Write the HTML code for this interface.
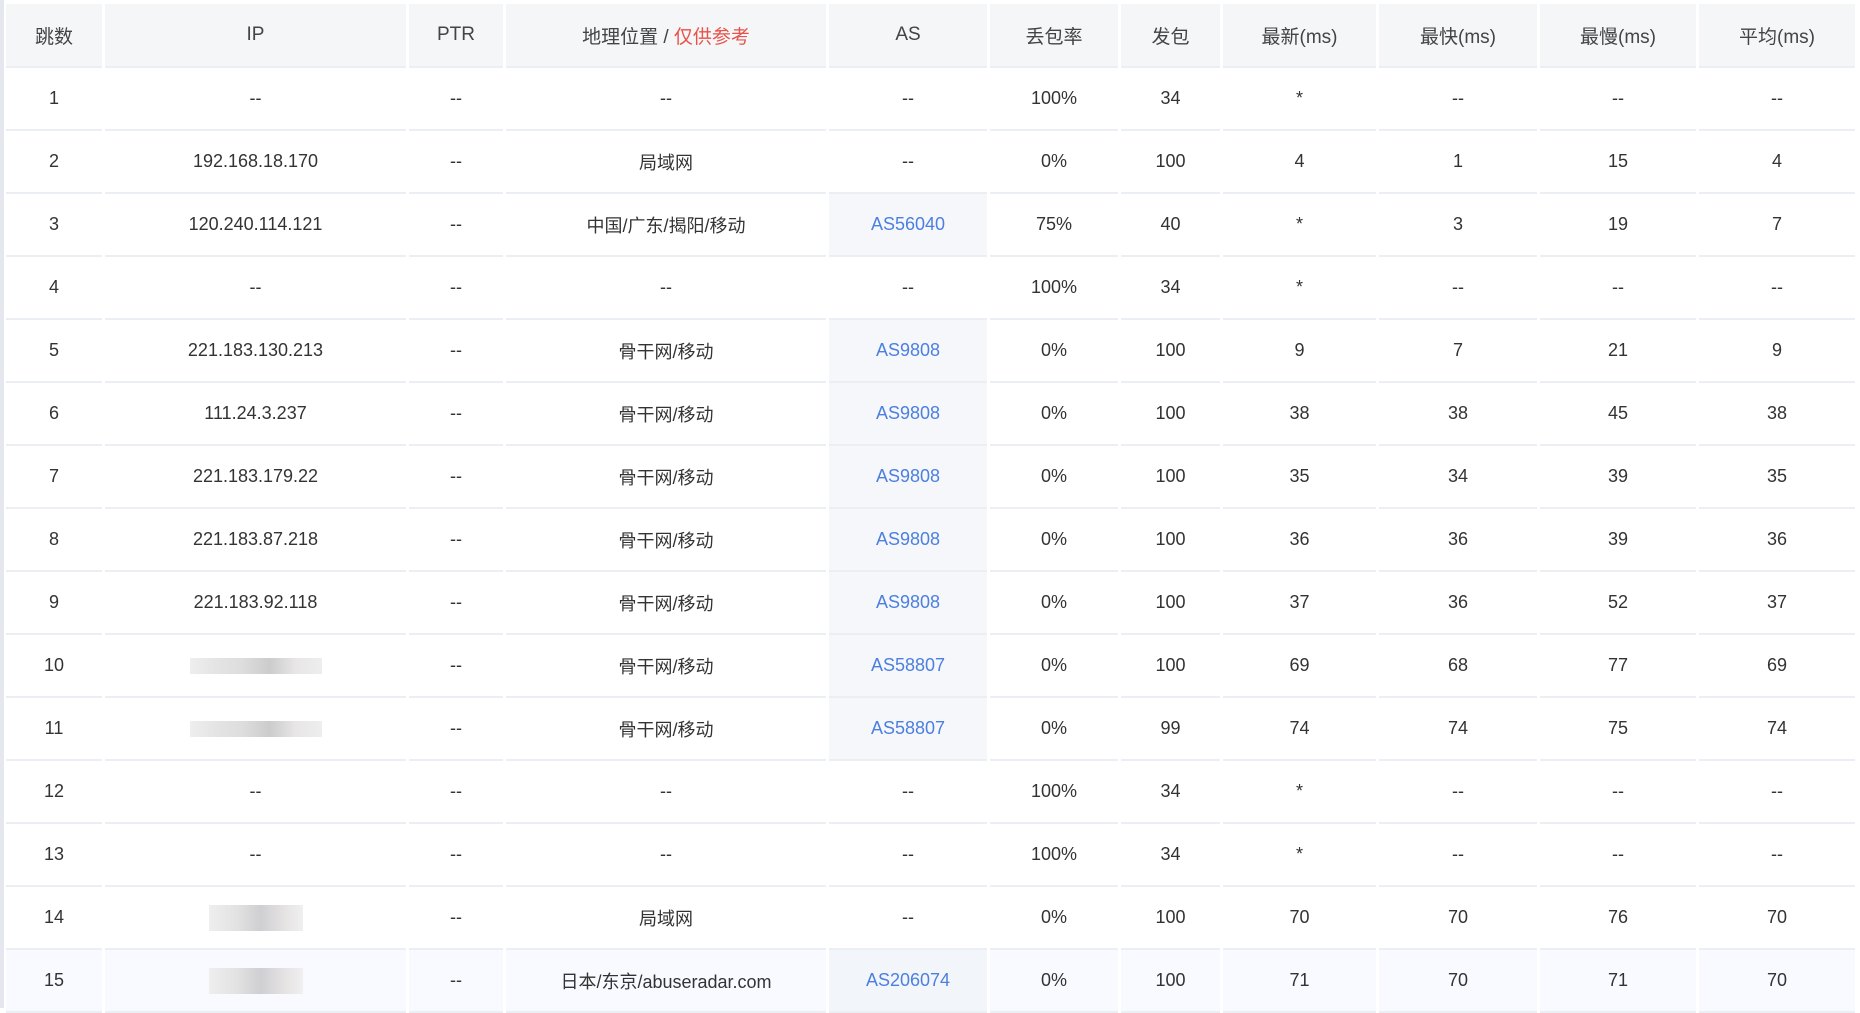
<!DOCTYPE html>
<html><head><meta charset="utf-8"><style>
html,body{margin:0;padding:0;background:#fff;width:1860px;height:1008px;overflow:hidden}
body{font-family:"Liberation Sans","Noto Sans CJK SC",sans-serif;color:#333;font-size:18px}
.edge{position:absolute;left:0;top:0;width:4px;height:1008px;background:#e4e7ed}
table{position:absolute;left:3px;top:4px;border-collapse:separate;border-spacing:3px 0;table-layout:fixed}
td,th{text-align:center;padding:0;border-bottom:2px solid #ebeef2;font-weight:normal}
th{height:62px;background:#f5f6f7;color:#444;font-size:19px}
td{height:61px}
.r{color:#e8524a}
.a{background:#f5f7fa;color:#4c7fe0}
tr.h td{background:#f8faff}
tr.h td.a{background:#f2f5fa}
.b{display:inline-block;width:132px;height:16px;vertical-align:middle;background:linear-gradient(90deg,#eee 0,#e4e4e4 20%,#ddd 40%,#ccc 60%,#e8e6e6 80%,#eee 100%)}
.b2{display:inline-block;width:94px;height:26px;vertical-align:middle;background:linear-gradient(90deg,#eee 0,#e2e2e2 30%,#cfcfd3 55%,#e5e2e2 80%,#f0f0f0 100%)}
</style></head><body>
<div class="edge"></div>
<table>
<colgroup><col style="width:96px"><col style="width:301px"><col style="width:94px"><col style="width:320px"><col style="width:158px"><col style="width:128px"><col style="width:99px"><col style="width:153px"><col style="width:158px"><col style="width:156px"><col style="width:156px"></colgroup>
<tr><th>跳数</th><th>IP</th><th>PTR</th><th>地理位置 / <span class="r">仅供参考</span></th><th>AS</th><th>丢包率</th><th>发包</th><th>最新(ms)</th><th>最快(ms)</th><th>最慢(ms)</th><th>平均(ms)</th></tr>
<tr><td>1</td><td>--</td><td>--</td><td>--</td><td>--</td><td>100%</td><td>34</td><td>*</td><td>--</td><td>--</td><td>--</td></tr>
<tr><td>2</td><td>192.168.18.170</td><td>--</td><td>局域网</td><td>--</td><td>0%</td><td>100</td><td>4</td><td>1</td><td>15</td><td>4</td></tr>
<tr><td>3</td><td>120.240.114.121</td><td>--</td><td>中国/广东/揭阳/移动</td><td class="a">AS56040</td><td>75%</td><td>40</td><td>*</td><td>3</td><td>19</td><td>7</td></tr>
<tr><td>4</td><td>--</td><td>--</td><td>--</td><td>--</td><td>100%</td><td>34</td><td>*</td><td>--</td><td>--</td><td>--</td></tr>
<tr><td>5</td><td>221.183.130.213</td><td>--</td><td>骨干网/移动</td><td class="a">AS9808</td><td>0%</td><td>100</td><td>9</td><td>7</td><td>21</td><td>9</td></tr>
<tr><td>6</td><td>111.24.3.237</td><td>--</td><td>骨干网/移动</td><td class="a">AS9808</td><td>0%</td><td>100</td><td>38</td><td>38</td><td>45</td><td>38</td></tr>
<tr><td>7</td><td>221.183.179.22</td><td>--</td><td>骨干网/移动</td><td class="a">AS9808</td><td>0%</td><td>100</td><td>35</td><td>34</td><td>39</td><td>35</td></tr>
<tr><td>8</td><td>221.183.87.218</td><td>--</td><td>骨干网/移动</td><td class="a">AS9808</td><td>0%</td><td>100</td><td>36</td><td>36</td><td>39</td><td>36</td></tr>
<tr><td>9</td><td>221.183.92.118</td><td>--</td><td>骨干网/移动</td><td class="a">AS9808</td><td>0%</td><td>100</td><td>37</td><td>36</td><td>52</td><td>37</td></tr>
<tr><td>10</td><td><span class="b"></span></td><td>--</td><td>骨干网/移动</td><td class="a">AS58807</td><td>0%</td><td>100</td><td>69</td><td>68</td><td>77</td><td>69</td></tr>
<tr><td>11</td><td><span class="b"></span></td><td>--</td><td>骨干网/移动</td><td class="a">AS58807</td><td>0%</td><td>99</td><td>74</td><td>74</td><td>75</td><td>74</td></tr>
<tr><td>12</td><td>--</td><td>--</td><td>--</td><td>--</td><td>100%</td><td>34</td><td>*</td><td>--</td><td>--</td><td>--</td></tr>
<tr><td>13</td><td>--</td><td>--</td><td>--</td><td>--</td><td>100%</td><td>34</td><td>*</td><td>--</td><td>--</td><td>--</td></tr>
<tr><td>14</td><td><span class="b2"></span></td><td>--</td><td>局域网</td><td>--</td><td>0%</td><td>100</td><td>70</td><td>70</td><td>76</td><td>70</td></tr>
<tr class="h"><td>15</td><td><span class="b2"></span></td><td>--</td><td>日本/东京/abuseradar.com</td><td class="a">AS206074</td><td>0%</td><td>100</td><td>71</td><td>70</td><td>71</td><td>70</td></tr>
</table>
</body></html>
